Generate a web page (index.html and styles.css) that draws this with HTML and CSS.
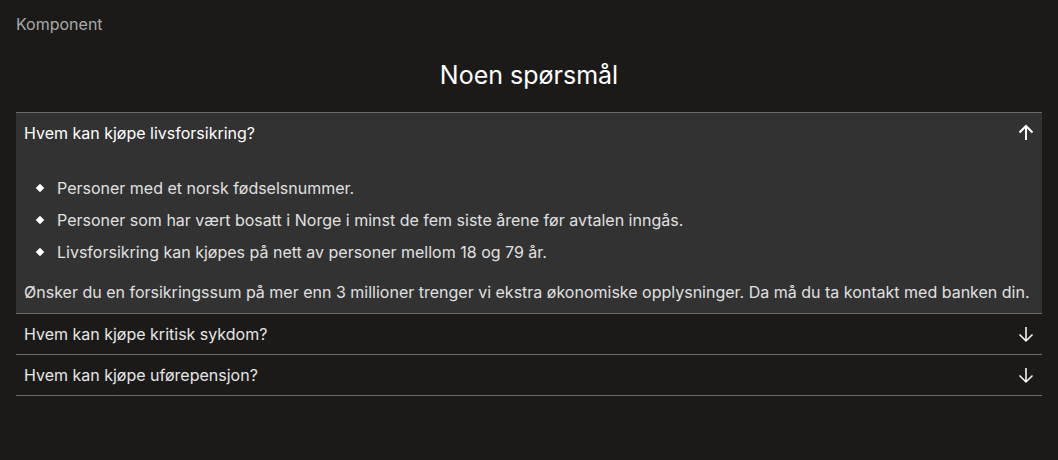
FILE: index.html
```html
<!DOCTYPE html>
<html lang="no">
<head>
<meta charset="utf-8">
<title>Komponent</title>
<link rel="stylesheet" href="styles.css">
</head>
<body>
<div class="page">
  <div class="label">Komponent</div>
  <h2 class="title">Noen spørsmål</h2>
  <div class="accordion">
    <div class="item open">
      <div class="head">
        <span class="q">Hvem kan kjøpe livsforsikring?</span>
        <svg class="icon" width="18" height="18" viewBox="0 0 18 18"><path d="M9 16V2M2.5 8.5L9 2l6.5 6.5" fill="none" stroke="#fff" stroke-width="2"/></svg>
      </div>
      <div class="body">
        <ul class="list">
          <li>Personer med et norsk fødselsnummer.</li>
          <li>Personer som har vært bosatt i Norge i minst de fem siste årene før avtalen inngås.</li>
          <li>Livsforsikring kan kjøpes på nett av personer mellom 18 og 79 år.</li>
        </ul>
        <p class="note">Ønsker du en forsikringssum på mer enn 3 millioner trenger vi ekstra økonomiske opplysninger. Da må du ta kontakt med banken din.</p>
      </div>
    </div>
    <div class="item">
      <div class="head">
        <span class="q">Hvem kan kjøpe kritisk sykdom?</span>
        <svg class="icon" width="18" height="18" viewBox="0 0 18 18"><path d="M9 2v14M2.5 9.5L9 16l6.5-6.5" fill="none" stroke="#fff" stroke-width="1.5"/></svg>
      </div>
    </div>
    <div class="item">
      <div class="head">
        <span class="q">Hvem kan kjøpe uførepensjon?</span>
        <svg class="icon" width="18" height="18" viewBox="0 0 18 18"><path d="M9 2v14M2.5 9.5L9 16l6.5-6.5" fill="none" stroke="#fff" stroke-width="1.5"/></svg>
      </div>
    </div>
  </div>
</div>
</body>
</html>
```

FILE: styles.css
```css
* { box-sizing: border-box; }
html, body {
  margin: 0;
  background: #1b1a19;
}
body {
  font-family: "Inter", "Liberation Sans", sans-serif;
  color: #fff;
}
.page {
  padding: 12px 16px 0;
}
.label {
  font-size: 16px;
  line-height: 24px;
  color: #a9a9a9;
}
.title {
  margin: 23px 0 0;
  text-align: center;
  font-size: 25px;
  font-weight: 400;
  line-height: 32px;
  color: #fff;
}
.accordion {
  margin-top: 21px;
  border-top: 1px solid #6a6a6a;
}
.item {
  border-bottom: 1px solid #6a6a6a;
}
.item.open {
  background: #323232;
}
.head {
  display: flex;
  align-items: center;
  justify-content: space-between;
  padding: 8px 8px 8px 8px;
  height: 40px;
  font-size: 16px;
  line-height: 24px;
  color: #e6e6e6;
}
.item.open .head { color: #fff; }
.icon { display: block; margin-right: -1px; }
.body {
  padding: 23px 8px 9px;
  font-size: 16px;
  line-height: 24px;
  color: #e0e0e0;
}
.list {
  list-style: none;
  margin: 0;
  padding: 0;
  display: flex;
  flex-direction: column;
  gap: 8px;
}
.list li {
  display: flex;
  align-items: center;
  gap: 14px;
  padding-left: 13px;
}
.list li::before {
  content: "";
  width: 6px;
  height: 6px;
  background: #fff;
  transform: rotate(45deg);
  flex: none;
}
.note {
  margin: 16px 0 0;
}
```
